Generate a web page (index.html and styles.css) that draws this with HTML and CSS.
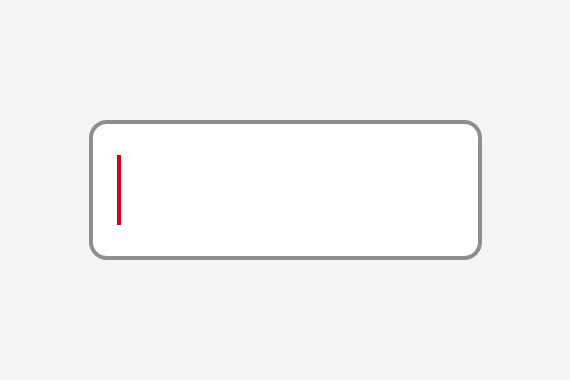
FILE: index.html
```html
<!DOCTYPE html>
<html>
<head>
    <link rel="stylesheet" href="styles.css">
</head>
<body>
    <div class="pagina">
        <div class="campo">
            <span class="cursor"></span>
        </div>
    </div>
</body>
</html>
```

FILE: styles.css
```css
body{
    margin: 0;
    background-color: #f4f4f4;
    font-family: "Liberation Sans", sans-serif;
}
.pagina{
    display: flex;
    align-items: center;
    justify-content: center;
    height: 100vh;
}
.campo{
    box-sizing: border-box;
    width: 393px;
    height: 140px;
    background-color: #ffffff;
    border: 4px solid #8e8e8e;
    border-radius: 18px;
    display: flex;
    align-items: center;
    padding-left: 24px;
}
.cursor{
    display: block;
    width: 4px;
    height: 70px;
    background-color: #d0021b;
}
```
